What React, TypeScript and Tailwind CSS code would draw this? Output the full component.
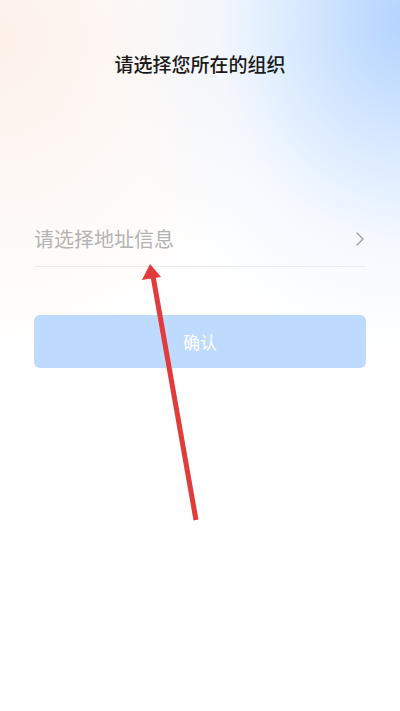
import { ChevronRight } from "lucide-react";

export default function App() {
  return (
    <div
      className="relative w-[400px] h-[711px] overflow-hidden bg-white bg-[radial-gradient(ellipse_300px_340px_at_410px_20px,#b1d2ff_0%,rgba(196,222,255,0.7)_35%,rgba(225,237,255,0.35)_65%,rgba(255,255,255,0)_100%),radial-gradient(ellipse_280px_320px_at_0px_40px,#fdf1ea_0%,rgba(253,244,238,0.6)_50%,rgba(255,255,255,0)_100%)]"
      style={{ fontFamily: '"Noto Sans CJK SC", "Noto Sans", sans-serif' }}
    >
      <div className="pt-[50px] text-center text-[19px] font-medium leading-[28px] text-[#1a1a1a]">
        请选择您所在的组织
      </div>

      <div className="mx-[34px] mt-[133px]">
        <div className="flex items-center justify-between h-[56px] border-b border-[#ececec]">
          <span className="text-[20px] text-[#b3b3b3]">请选择地址信息</span>
          <ChevronRight className="w-[24px] h-[24px] -mr-[6px] text-[#9a9a9a]" strokeWidth={1.2} />
        </div>

        <button className="mt-[48px] w-full h-[53px] rounded-[6px] bg-[#bedbff] text-white text-[17px]">
          确认
        </button>
      </div>

      <svg className="absolute left-0 top-0 pointer-events-none" width="400" height="711">
        <line x1="196" y1="520" x2="153" y2="276" stroke="#e23b3b" strokeWidth="5" />
        <polygon points="150,264 142,280 161,277" fill="#e23b3b" />
      </svg>
    </div>
  );
}
